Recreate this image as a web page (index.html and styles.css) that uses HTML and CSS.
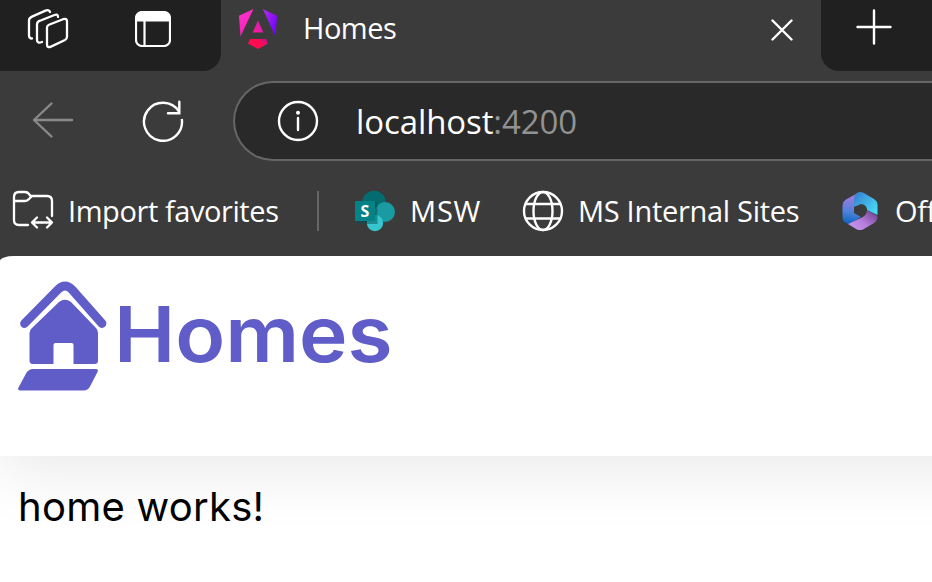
FILE: index.html
```html
<!DOCTYPE html>
<html lang="en">
<head>
<meta charset="utf-8">
<title>Homes</title>
<link rel="stylesheet" href="styles.css">
</head>
<body>
<div class="browser">
  <div class="tabs">
    <div class="tabs-left">
      <svg class="workspaces" width="44" height="44" viewBox="0 0 44 44" fill="none" stroke="#fff" stroke-width="2.300" stroke-linecap="round" stroke-linejoin="round">
        <path d="M21 19.500Q21 17.500 23 16.700L37 11.200Q41 10 41 13.200V28.500Q41 31 39 32L25 38.600Q21 40.200 21 36.500Z"/>
        <path d="M32 9Q32 5.500 28.500 7L14 12.700Q11 13.800 11 16.500V32Q11 35.800 16 34"/>
        <path d="M24 4Q23 1.300 19.500 2.600L6 8.600Q3 10 3 12.500V27.500Q3 30.500 6 30.500"/>
      </svg>
      <svg class="tab-actions" width="36" height="36" viewBox="0 0 36 36">
        <rect x="1" y="1" width="34" height="34" rx="6" fill="none" stroke="#fff" stroke-width="2.200"/>
        <path d="M1 10.500V7a6 6 0 0 1 6-6h22a6 6 0 0 1 6 6v3.500z" fill="#fff"/>
        <path d="M9.500 10v25" stroke="#fff" stroke-width="2.200"/>
      </svg>
    </div>
    <div class="tab">
      <svg width="38" height="40" viewBox="0 0 38 40">
        <defs>
          <linearGradient id="ng-a" x1="0" y1="0" x2=".4" y2="1"><stop stop-color="#ff35d2"/><stop offset="1" stop-color="#f51fb5"/></linearGradient>
          <linearGradient id="ng-b" x1="0" y1="0" x2="1" y2=".8"><stop stop-color="#b52de8"/><stop offset="1" stop-color="#6c00ff"/></linearGradient>
          <linearGradient id="ng-c" x1="0" y1=".5" x2="1" y2="0"><stop offset=".5" stop-color="#ff0c50"/><stop offset="1" stop-color="#c40b99"/></linearGradient>
          <linearGradient id="ng-d" x1="0" y1="1" x2="1" y2="0"><stop stop-color="#ff1897"/><stop offset="1" stop-color="#c723bd"/></linearGradient>
        </defs>
        <path d="M14.500 0L0 6.700 1.500 27.500z" fill="url(#ng-a)"/>
        <path d="M23.700 0L38 6.700 36.500 27.500z" fill="url(#ng-b)"/>
        <path d="M19 11.500L24.300 23.500H13.700z" fill="url(#ng-d)"/>
        <path d="M11 30H27L29 34.500 19 40 9 34.500z" fill="url(#ng-c)"/>
      </svg>
      <span class="tab-title">Homes</span>
      <svg class="close" width="22" height="22" viewBox="0 0 22 22" stroke="#fff" stroke-width="2.400" stroke-linecap="round"><path d="M1.500 1.500l19 19M20.500 1.500l-19 19"/></svg>
    </div>
    <div class="tabs-right">
      <svg width="36" height="36" viewBox="0 0 36 36" stroke="#fff" stroke-width="2.400" stroke-linecap="round"><path d="M18 1.500v33M1.500 18h33"/></svg>
    </div>
  </div>
  <div class="toolbar">
    <svg class="back" width="42" height="38" viewBox="0 0 42 38" fill="none" stroke="#8c8a88" stroke-width="2.400" stroke-linecap="round" stroke-linejoin="round"><path d="M19.500 2.500L2 19l17.500 16.500M2 19h38"/></svg>
    <svg class="reload" width="42" height="42" viewBox="0 0 42 42" fill="none" stroke="#fff" stroke-width="2.400"><path d="M39.800 19A19 19 0 1 1 37 11.500"/><path d="M37.300 1.800v11.400H26" stroke-linecap="round" stroke-width="2.400"/></svg>
    <div class="address">
      <svg width="42" height="42" viewBox="0 0 42 42"><circle cx="21" cy="21" r="19" fill="none" stroke="#fff" stroke-width="2.400"/><path d="M21 18v12" stroke="#fff" stroke-width="2.400" stroke-linecap="round"/><circle cx="21" cy="12.800" r="2" fill="#fff"/></svg>
      <span class="url">localhost<span class="port">:4200</span></span>
    </div>
  </div>
  <div class="bookmarks">
    <svg class="folder" width="42" height="40" viewBox="0 0 42 40" fill="none" stroke="#fff" stroke-width="2.300" stroke-linecap="round" stroke-linejoin="round">
      <path d="M16 35H7Q2 35 2 30V7Q2 2 7 2H13Q15.500 2 17 4L18.500 6H35Q40 6 40 11V26"/>
      <path d="M2 11H13Q15.500 11 17 9L19.500 6.500"/>
      <path d="M20 32.500H40M25 27.500l-5 5 5 5M35 27.500l5 5-5 5"/>
    </svg>
    <span class="label import">Import favorites</span>
    <i class="divider"></i>
    <svg class="site-icon" width="42" height="42" viewBox="0 0 42 42">
      <circle cx="20" cy="12.500" r="11.800" fill="#036c70"/><circle cx="31" cy="22" r="10" fill="#1a9ba1"/><circle cx="21" cy="33" r="8.200" fill="#37c6d0"/>
      <rect x="4" y="12" width="19.500" height="22" fill="#034f54" opacity=".5"/><rect x="1" y="11" width="20" height="20" rx="1" fill="#038387"/>
      <text class="s" x="11" y="26.600" text-anchor="middle">S</text>
    </svg>
    <span class="label msw">MSW</span>
    <svg class="globe" width="42" height="42" viewBox="0 0 42 42" fill="none" stroke="#fff" stroke-width="2.400"><circle cx="21" cy="21" r="19"/><ellipse cx="21" cy="21" rx="9.500" ry="19"/><path d="M3.500 14h35M3.500 28.500h35"/></svg>
    <span class="label internal">MS Internal Sites</span>
    <svg class="office-icon" width="36" height="40" viewBox="0 0 36 40">
      <defs>
        <linearGradient id="o-a" x1="0" y1="0" x2="1" y2=".8"><stop stop-color="#377acb"/><stop offset="1" stop-color="#48dcf8"/></linearGradient>
        <linearGradient id="o-b" x1=".5" y1="0" x2=".4" y2="1"><stop stop-color="#b17adf"/><stop offset=".6" stop-color="#4c82db"/><stop offset="1" stop-color="#0b62bd"/></linearGradient>
        <linearGradient id="o-c" x1="0" y1="1" x2="1" y2=".2"><stop stop-color="#cd98f5"/><stop offset=".5" stop-color="#b77edb"/><stop offset="1" stop-color="#6e4592"/></linearGradient>
      </defs>
      <path d="M14 3L4 8.500Q.5 10.500.5 15V26Q.5 30 4 32L7 33.500 19 26 12 22V10z" fill="url(#o-b)"/>
      <path d="M14.500 2.200Q18-.2 21.500 1.800L32 8Q35.500 10 35.500 14V24L25 19V18Q24 13.500 19 13L12 16V8Q12 4 14.500 2.200z" fill="url(#o-a)"/>
      <path d="M25 19L35.500 25Q35.500 30 32 32L21.500 38.200Q18 40 14.500 38.200L6 33 20 26.500Q25 24 25 19z" fill="url(#o-c)"/>
    </svg>
    <span class="label office">Off</span>
  </div>
</div>
<div class="page">
  <header class="brand">
    <svg width="90" height="112" viewBox="0 0 90 112" fill="#605dc8">
      <path d="M6.500 43.500L40 9.500Q47 2.500 54 9.500L84 43.500" fill="none" stroke="#605dc8" stroke-width="8.800" stroke-linecap="round"/>
      <path d="M41 22Q47 17.500 53 22L78 48Q80 50 80 53V80.500Q80 84 76.500 84H55.500V65Q55.500 63 53.500 63H37.500Q35.500 63 35.500 65V84H15Q11.500 84 11.500 80.500V53Q11.500 50 14 48z"/>
      <path d="M15 89H77.500Q81 89 79.500 92L72 106.500Q70 110.500 65.500 110.500H2Q-.8 110.500.5 107.500L8 93.500Q10.500 89 15 89z"/>
    </svg>
    <span class="brand-name">Homes</span>
  </header>
  <main class="content">home works!</main>
</div>
</body>
</html>
```
FILE: styles.css
```css
* { box-sizing: border-box; }
body {
  margin: 0;
  width: 932px;
  height: 582px;
  overflow: hidden;
  background: #3b3b3b;
  color: #fff;
  font-family: "Open Sans", "Noto Sans", sans-serif;
}
svg { display: block; flex: none; }
span { white-space: nowrap; }
.browser { height: 256px; background: #3b3b3b; }
.tabs { display: flex; height: 71px; }
.tabs-left {
  display: flex;
  width: 221px;
  background: #202020;
  border-bottom-right-radius: 18px;
}
.workspaces { margin: 8px 0 0 26px; }
.tab-actions { margin: 11px 0 0 65px; }
.tab { display: flex; width: 600px; padding: 9px 0 0 18px; }
.tab-title {
  width: 467px;
  margin: -1px 0 0 26px;
  font-size: 29px;
  line-height: 40px;
  letter-spacing: -0.5px;
}
.close { margin: 10px 0 0 1px; }
.tabs-right {
  flex: 1;
  padding: 9px 0 0 35px;
  background: #202020;
  border-bottom-left-radius: 18px;
}
.toolbar { display: flex; height: 100px; align-items: center; }
.back { margin: -2px 0 0 32px; }
.reload { margin: 0 0 0 68px; }
.address {
  display: flex;
  width: 699px;
  align-items: center;
  height: 80px;
  margin-left: 49px;
  padding-left: 42px;
  background: #292929;
  border: 2px solid #666;
  border-right: 0;
  border-radius: 40px 0 0 40px;
}
.url { margin: 1px 0 0 37px; font-size: 33px; line-height: 44px; letter-spacing: -0.1px; }
.port { color: #929292; }
.bookmarks { display: flex; height: 80px; align-items: center; overflow: hidden; }
.folder { margin: -2px 0 0 12px; }
.label { flex: none; margin-top: -1px; font-size: 29px; line-height: 40px; }
.import { width: 249px; margin-left: 14px; letter-spacing: -0.42px; }
.divider { flex: none; width: 2px; height: 40px; background: #666; }
.site-icon { margin-left: 35px; }
.s { font: bold 16px "Open Sans", sans-serif; fill: #fff; }
.msw { width: 112px; margin-left: 14px; letter-spacing: 0.8px; }
.internal { width: 264px; margin-left: 14px; letter-spacing: -0.3px; }
.office { width: 37px; margin-left: 17px; overflow: hidden; letter-spacing: -0.4px; }
.page {
  height: 326px;
  overflow: hidden;
  background: #fff;
  border-top-left-radius: 14px 5px;
  color: #000;
  font-family: Inter, sans-serif;
}
.brand {
  display: flex;
  width: 1200px;
  height: 200px;
  padding: 24px 0 0 18px;
  box-shadow: 0 12.500px 62.500px #e8e8e8;
}
.brand-name {
  margin: 12px 0 0 6px;
  color: #605dc8;
  font-size: 77px;
  font-weight: 600;
  line-height: 84px;
  transform: scaleX(1.066);
  transform-origin: left;
}
.content { padding: 26px 18px; font-size: 40px; line-height: 50px; letter-spacing: 0.25px; }
```
